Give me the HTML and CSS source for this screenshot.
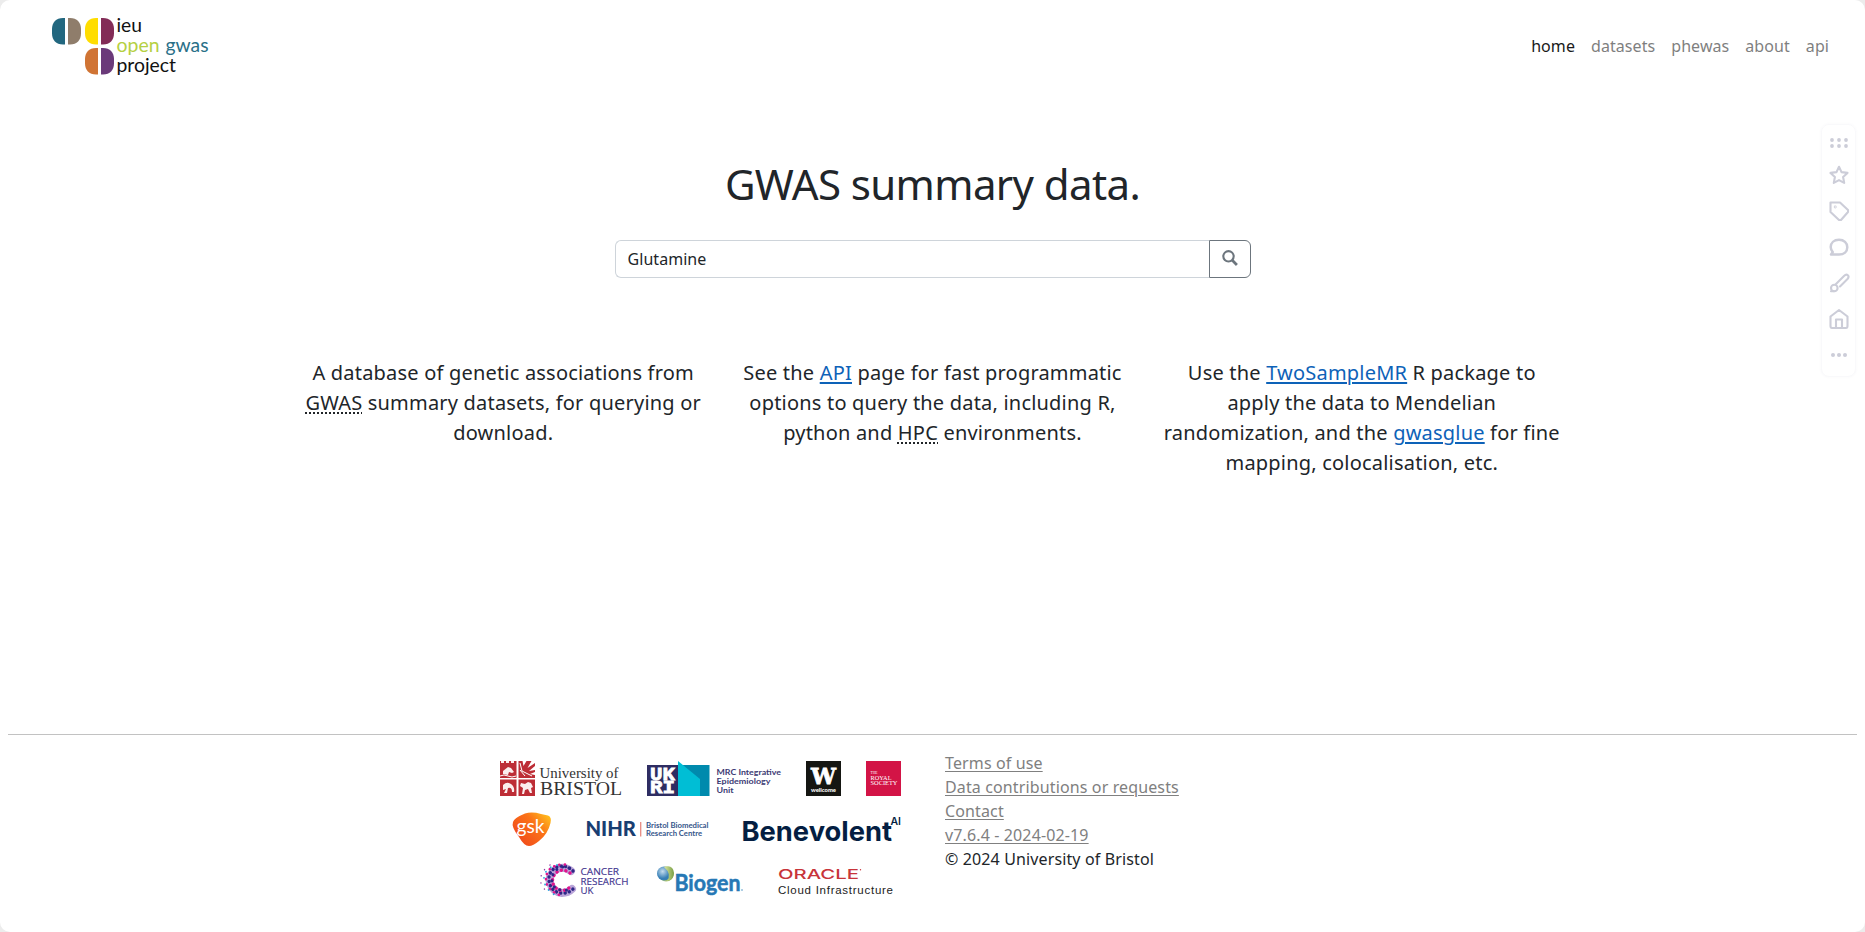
FILE: index.html
```html
<!DOCTYPE html>
<html lang="en">
<head>
<meta charset="utf-8">
<title>IEU OpenGWAS project</title>
<link rel="stylesheet" href="styles.css">
</head>
<body>
<div class="page">
  <header class="navbar">
    <a class="brand" href="#">
      <svg width="162" height="64" viewBox="50 15 162 64">
        <path fill="#22677f" d="M65 18v26.500h-2c-7 0-11-4.500-11-11v-4.500c0-6.500 4-11 11-11z"/>
        <path fill="#8f7d6b" d="M68 18v26.500h2c7 0 11-4.500 11-11v-4.500c0-6.500-4-11-11-11z"/>
        <path fill="#ffdd00" d="M98 18v26.500h-2c-7 0-11-4.500-11-11v-4.500c0-6.500 4-11 11-11z"/>
        <path fill="#832c57" d="M101 18v26.500h2c7 0 11-4.500 11-11v-4.500c0-6.500-4-11-11-11z"/>
        <path fill="#d07434" d="M98 48v26.500h-2c-7 0-11-4.500-11-11v-4.500c0-6.500 4-11 11-11z"/>
        <path fill="#6b3a7a" d="M101 48v26.500h2c7 0 11-4.500 11-11v-4.500c0-6.500-4-11-11-11z"/>
        <g class="brand-text">
          <text x="116.500" y="32" textLength="25.500" lengthAdjust="spacingAndGlyphs">ieu</text>
          <text class="brand-open" x="116.500" y="52" textLength="43" lengthAdjust="spacingAndGlyphs">open</text>
          <text class="brand-gwas" x="165.500" y="52" textLength="43" lengthAdjust="spacingAndGlyphs">gwas</text>
          <text x="116.500" y="71.500" textLength="59.500" lengthAdjust="spacingAndGlyphs">project</text>
        </g>
      </svg>
    </a>
    <nav class="nav">
      <a class="nav-link active" href="#">home</a>
      <a class="nav-link" href="#">datasets</a>
      <a class="nav-link" href="#">phewas</a>
      <a class="nav-link" href="#">about</a>
      <a class="nav-link" href="#">api</a>
    </nav>
  </header>

  <main class="main">
    <h1 class="title">GWAS summary data.</h1>
    <form class="search">
      <input class="search-input" type="text" value="Glutamine">
      <button class="search-btn" type="button" aria-label="Search">
        <svg width="16" height="16" viewBox="0 0 16 16" fill="none" stroke="#6c757d"><circle cx="6.500" cy="6.300" r="5.200" stroke-width="2.100"/><path d="M10.300 10.200l4.600 4.800" stroke-width="2.700"/></svg>
      </button>
    </form>
    <div class="columns">
      <p class="col">A database of genetic associations from <abbr>GWAS</abbr> summary datasets, for querying or download.</p>
      <p class="col">See the <a href="#">API</a> page for fast programmatic options to query the data, including R, python and <abbr>HPC</abbr> environments.</p>
      <p class="col">Use the <a href="#">TwoSampleMR</a> R package to apply the data to Mendelian randomization, and the <a href="#">gwasglue</a> for fine mapping, colocalisation, etc.</p>
    </div>
  </main>

  <footer class="footer">
    <div class="logos">
      <div class="logo-row">
        <svg width="122" height="35" viewBox="0 0 122 35">
          <path fill="#bd2d36" d="M0 0h16.500v17H0zM0 18.500h16.500V35H0zM18.500 18.500H35V35H18.500z"/>
          <path fill="#bd2d36" d="M18.500 0h4l1 5 3-5h5l-4 7 7.500-5v3l-6 5 6-1v2l-5 2 5 1v3H18.500z"/>
          <g fill="#fbeeee"><path d="M1 0h3v2H1zM6 0h3v2H6zM11 0h3v2h-3zM3 10l5-4 3 1 3 4-2 1-3-1-1 3-5-1z"/><path d="M3 24q4-4 8-1 4 3 3 8h-2q0-5-4-4l-1 5H4l2-4-3 1z"/><path d="M21 22l4 1 3-2 3 1 2 4-2 1 1 5h-2l-2-4-3 1-1 4h-2l1-6-3-2z"/></g>
          <path fill="none" stroke="#fff" d="M0 15q4-2 8 0t8 0M20 2l2 8 10 5M20 9l5 6"/>
          <g class="serif"><text x="39.500" y="17" font-size="14" textLength="79" lengthAdjust="spacingAndGlyphs">University of</text><text x="40" y="34.300" font-size="18.500" textLength="82" lengthAdjust="spacingAndGlyphs">BRISTOL</text></g>
        </svg>
        <svg width="134" height="35" viewBox="0 0 134 35">
          <path fill="#2e2d62" d="M0 4h32v31H0z"/><path fill="#008aad" d="M32 4h30.500v31H32z"/><path fill="#00bed5" d="M31 0l22 18v17H31z"/>
          <g class="ukri"><text x="3" y="19" textLength="25" lengthAdjust="spacingAndGlyphs">UK</text><text x="3" y="32.300" textLength="25" lengthAdjust="spacingAndGlyphs">RI</text></g>
          <g class="mrc"><text x="69.500" y="14" textLength="64.500" lengthAdjust="spacingAndGlyphs">MRC Integrative</text><text x="69.500" y="22.700" textLength="54" lengthAdjust="spacingAndGlyphs">Epidemiology</text><text x="69.500" y="31.500" textLength="17" lengthAdjust="spacingAndGlyphs">Unit</text></g>
        </svg>
        <svg width="35" height="35" viewBox="0 0 35 35">
          <path fill="#151612" d="M0 0h35v35H0z"/>
          <text class="big-w" x="5" y="23.300" textLength="25" lengthAdjust="spacingAndGlyphs">W</text>
          <text class="wellcome" x="5" y="30.500" textLength="25" lengthAdjust="spacingAndGlyphs">wellcome</text>
        </svg>
        <svg width="35" height="35" viewBox="0 0 35 35">
          <path fill="#d31446" d="M0 0h35v35H0z"/>
          <g class="royal"><text x="4.500" y="13" font-size="4" textLength="7" lengthAdjust="spacingAndGlyphs">THE</text><text x="4.500" y="18.600" textLength="21" lengthAdjust="spacingAndGlyphs">ROYAL</text><text x="4.500" y="24.300" textLength="27" lengthAdjust="spacingAndGlyphs">SOCIETY</text></g>
        </svg>
      </div>
      <div class="logo-row">
        <svg width="39" height="35" viewBox="0 0 39 35">
          <defs><linearGradient id="gsk" x1="0" y1=".7" x2=".9" y2="0"><stop offset="0" stop-color="#f04a1c"/><stop offset=".6" stop-color="#fb7318"/><stop offset="1" stop-color="#ffc01d"/></linearGradient></defs>
          <path fill="url(#gsk)" d="M13 1.500Q20-.5 29 2l7 1.500Q40 5 38.500 11 36 22 27 29q-6 5-10 5-5 0-10-9Q-1 15 1 10q1-4 12-8.500z"/>
          <text class="gsk" x="4.500" y="21" textLength="28" lengthAdjust="spacingAndGlyphs">gsk</text>
        </svg>
        <svg width="142" height="35" viewBox="0 0 142 35">
          <text class="nihr" x="9.500" y="24.300" textLength="50.500" lengthAdjust="spacingAndGlyphs">NIHR</text>
          <path d="M64.700 10v14.500" stroke="#e88a80" stroke-width="1.300"/>
          <g class="brc"><text x="70" y="15.500" textLength="62.500" lengthAdjust="spacingAndGlyphs">Bristol Biomedical</text><text x="70" y="24" textLength="56" lengthAdjust="spacingAndGlyphs">Research Centre</text></g>
        </svg>
        <svg width="158" height="35" viewBox="0 0 158 35">
          <text class="benevolent" x="-1.500" y="29" textLength="150.500" lengthAdjust="spacingAndGlyphs">Benevolent</text>
          <text class="ai" x="147.500" y="12.500" textLength="10.500" lengthAdjust="spacingAndGlyphs">AI</text>
        </svg>
      </div>
      <div class="logo-row">
        <svg width="94" height="35" viewBox="0 0 94 35">
          <g fill="none" stroke-linecap="round">
            <path stroke="#b9a4d8" stroke-width="8" d="M34 8Q26 2 18 7q-7 6-5 13 3 9 12 10 6 0 10-4"/>
            <path stroke="#2e2686" stroke-width="3.400" stroke-dasharray=".1 4.300" d="M36 8Q29 1 20 4q-9 4-8 14 2 11 12 12 7 1 12-4"/>
            <path stroke="#e0148c" stroke-width="3.400" stroke-dasharray=".1 4.500" d="M33 10Q26 5 20 9q-7 6-3 14 5 6 11 4 3-1 5-3"/>
            <path stroke="#2e2686" stroke-width="3" stroke-dasharray=".1 6.300" d="M32 5Q26 2 19 7q-5 5-4 12 2 8 10 8 6 1 9-2"/>
            <path stroke="#e0148c" stroke-width="2.600" stroke-dasharray=".1 5.300" d="M28 1.500Q17 1 11 8q-4 9 0 16 7 8 16 9"/>
            <path stroke="#29a9e0" stroke-width="1.800" stroke-dasharray=".1 6.500" d="M20 2Q6 5 7 18q2 9 11 14"/>
            <path stroke="#8c3ba0" stroke-width="1.400" stroke-dasharray=".1 7" d="M13 2Q2 9 4 20q2 6 7 9"/>
          </g>
          <g class="cruk"><text x="43.500" y="11.700" textLength="38.500" lengthAdjust="spacingAndGlyphs">CANCER</text><text x="43.500" y="21.500" textLength="48" lengthAdjust="spacingAndGlyphs">RESEARCH</text><text x="43.500" y="31.300" textLength="13" lengthAdjust="spacingAndGlyphs">UK</text></g>
        </svg>
        <svg width="89" height="35" viewBox="0 0 89 35">
          <defs><radialGradient id="bg1" cx=".4" cy=".35"><stop offset="0" stop-color="#c4dcee"/><stop offset="1" stop-color="#377fb6"/></radialGradient><linearGradient id="bg2"><stop offset="0" stop-color="#dde9a0"/><stop offset="1" stop-color="#789d45"/></linearGradient></defs>
          <circle cx="10" cy="11" r="7.500" fill="url(#bg2)"/><circle cx="8" cy="10.500" r="7" fill="url(#bg1)"/><path fill="url(#bg2)" d="M8 4q9-3 10 6 0 7-7 8 5-7-3-14z"/>
          <text class="biogen" x="18.500" y="27.500" textLength="66" lengthAdjust="spacingAndGlyphs">Biogen</text><circle cx="86" cy="27" r=".7" fill="#2678b5"/>
        </svg>
        <svg width="131" height="35" viewBox="0 0 131 35">
          <text class="oracle" x="8" y="16" textLength="81" lengthAdjust="spacingAndGlyphs">ORACLE</text>
          <circle cx="90.500" cy="6.800" r=".7" fill="#c8343a"/>
          <text class="oci" x="8" y="31" textLength="115">Cloud Infrastructure</text>
        </svg>
      </div>
    </div>
    <div class="links">
      <a href="#">Terms of use</a>
      <a href="#">Data contributions or requests</a>
      <a href="#">Contact</a>
      <a href="#">v7.6.4 - 2024-02-19</a>
      <span>© 2024 University of Bristol</span>
    </div>
  </footer>

  <aside class="tools">
    <svg class="dots" viewBox="0 0 20 20"><circle cx="3" cy="7" r="1.900"/><circle cx="10" cy="7" r="1.900"/><circle cx="17" cy="7" r="1.900"/><circle cx="3" cy="13" r="1.900"/><circle cx="10" cy="13" r="1.900"/><circle cx="17" cy="13" r="1.900"/></svg>
    <svg viewBox="0 0 20 20"><path d="M10 1.800l2.500 5.300 6 .800-4.400 4.100 1.100 5.900-5.200-2.800-5.200 2.800 1.100-5.900L1.500 7.900l6-.8z"/></svg>
    <svg viewBox="0 0 20 20"><path d="M1.500 1.500h9.500l8 7.500v2L12 19h-2L1.500 11z"/><circle cx="6.200" cy="6" r=".4"/></svg>
    <svg viewBox="0 0 20 20"><path stroke-width="2.500" d="M2 17.500h8c5 0 8.300-3 8.300-7.300S15 2.800 10 2.800s-8.300 3-8.300 7.300c0 2 .8 3.700 2.100 5z"/></svg>
    <svg viewBox="0 0 20 20"><circle cx="5.300" cy="15" r="3.300"/><path d="M7 11L15 3c3-3 6 0 3.500 3L11 13.500M2 18.300h3"/></svg>
    <svg viewBox="0 0 20 20"><path d="M1.500 7.500L10 1l8.500 6.500v9.500q0 2-1.500 2h-14Q1.500 19 1.500 17zM7 18.500v-8h6v8"/></svg>
    <svg class="dots" viewBox="0 0 20 20"><circle cx="4" cy="10" r="2"/><circle cx="10" cy="10" r="2"/><circle cx="16" cy="10" r="2"/></svg>
  </aside>
</div>
</body>
</html>
```

FILE: styles.css
```css
* { box-sizing: border-box; }
body { margin: 0; background: #ececec; font-family: "Noto Sans", "Open Sans", sans-serif; font-size: 16px; line-height: 24px; color: #212529; }
.page { position: relative; height: 932px; background: #fff; border-radius: 10px; display: flex; flex-direction: column; overflow: hidden; }
svg { display: block; flex: none; overflow: visible; }

.navbar { display: flex; justify-content: space-between; align-items: flex-start; height: 92px; padding: 15px 36px 0 50px; }
.brand-text { font-family: "Lato", sans-serif; font-size: 18.500px; fill: #111; }
.brand-open { fill: #b5d043; }
.brand-gwas { fill: #2a7088; }
.nav { display: flex; gap: 16px; padding-top: 19px; }
.nav-link { color: #7f7f7f; text-decoration: none; font-size: 16px; letter-spacing: 0.070px; }
.nav-link.active { color: #191919; }

.main { flex: none; height: 642px; display: flex; flex-direction: column; align-items: center; padding-top: 66px; }
.title { margin: 0; height: 82px; font-size: 42px; line-height: 52px; font-weight: 400; letter-spacing: -0.600px; white-space: nowrap; }
.search { display: flex; width: 636px; height: 38px; }
.search-input { flex: 1; min-width: 0; border: 1px solid #ced4da; border-right: 0; border-radius: 6px 0 0 6px; padding: 0 12px; font: inherit; letter-spacing: 0.050px; color: #212529; outline: none; background: #fff; }
.search-btn { width: 42px; border: 1px solid #6c757d; border-radius: 0 6px 6px 0; background: #fff; padding: 0 0 2px; display: flex; align-items: center; justify-content: center; }
.columns { display: grid; grid-template-columns: repeat(3, 429.300px); margin-top: 80px; }
.col { margin: 0; padding: 0 13.500px; text-align: center; font-size: 20px; line-height: 30px; letter-spacing: 0.200px; }
.col a { color: #0d62b8; text-decoration: underline; text-underline-offset: 2px; }
.col abbr { text-decoration: underline dotted; text-underline-offset: 2px; }

.footer { flex: 1; margin: 0 8px; border-top: 1px solid #c2c2c2; display: flex; justify-content: flex-start; padding: 16px 0 0 492px; }
.logos { width: 401px; padding-top: 10px; display: flex; flex-direction: column; gap: 16px; }
.logo-row { display: flex; justify-content: flex-end; gap: 25px; }
.links { display: flex; flex-direction: column; align-items: flex-start; margin-left: 44px; letter-spacing: 0.130px; white-space: nowrap; }
.links a { color: #808080; text-decoration: underline; text-underline-offset: 2px; }

.serif { font-family: "Liberation Serif", serif; fill: #333; }
.ukri { font-family: "Liberation Mono", monospace; font-weight: 700; font-size: 18px; fill: #fff; stroke: #fff; stroke-width: .8; }
.mrc { font-family: "Lato", sans-serif; font-weight: 700; font-size: 8px; fill: #3c3a73; }
.big-w { font-family: "DejaVu Serif", serif; font-weight: 700; font-size: 23px; fill: #fff; stroke: #fff; stroke-width: .8; }
.wellcome { font-family: "Lato", sans-serif; font-weight: 900; font-size: 6px; fill: #fff; }
.royal { font-family: "Liberation Serif", serif; font-size: 6px; fill: #fff; }
.gsk { font-family: "Lato", sans-serif; font-size: 19px; fill: #fff; }
.nihr { font-family: "Lato", sans-serif; font-weight: 900; font-size: 20px; fill: #193e72; }
.brc { font-family: "Lato", sans-serif; font-weight: 700; font-size: 7.500px; fill: #35558a; }
.benevolent { font-family: "Inter", sans-serif; font-weight: 700; font-size: 27px; fill: #041e42; }
.ai { font-family: "Inter", sans-serif; font-weight: 600; font-size: 10.500px; fill: #041e42; }
.cruk { font-family: "Open Sans", sans-serif; font-size: 9.700px; fill: #3f358f; stroke: #3f358f; stroke-width: .15; }
.biogen { font-family: "Lato", sans-serif; font-weight: 700; font-size: 22px; fill: #2678b5; stroke: #2678b5; stroke-width: .5; }
.oracle { font-family: "Inter", sans-serif; font-weight: 500; font-size: 13.500px; fill: #c8343a; }
.oci { font-family: "Liberation Sans", sans-serif; font-size: 11.500px; fill: #222; }

.tools { position: absolute; left: 1821px; top: 124px; width: 35px; height: 253px; border: 1px solid #f9f9fb; border-radius: 8px; box-shadow: 0 0 3px rgba(80, 80, 120, .04); display: flex; flex-direction: column; align-items: center; gap: 16px; padding: 8px 0 0; }
.tools svg { width: 20px; height: 20px; fill: none; stroke: #cccdd8; stroke-width: 2.100; stroke-linejoin: round; stroke-linecap: round; filter: blur(.35px); }
.tools .dots { fill: #cccdd8; stroke: none; }
.tools .dots:first-child { margin-bottom: -4px; }
```
